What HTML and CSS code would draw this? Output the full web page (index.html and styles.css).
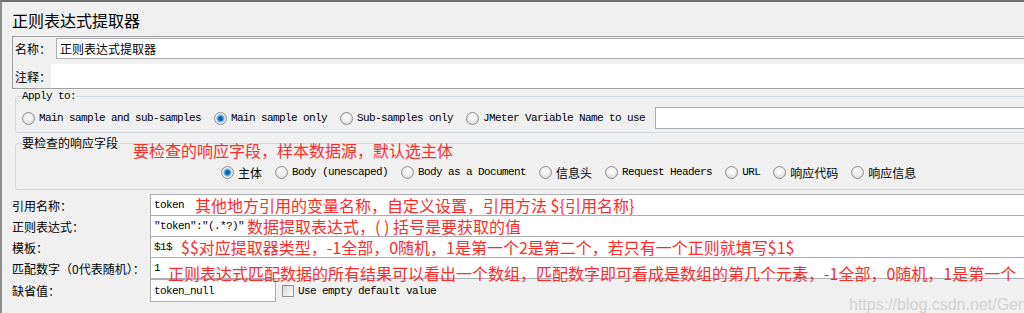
FILE: index.html
```html
<!DOCTYPE html>
<html lang="zh-CN">
<head>
  <meta charset="UTF-8" />
  <title>正则表达式提取器</title>
  <link rel="stylesheet" href="styles.css">
</head>
<body>
  <div class="page">
    <h1 class="title">正则表达式提取器</h1>

    <div class="panel">
      <div class="panel-row">
        <span class="panel-label">名称：</span>
        <div class="box name-box">正则表达式提取器</div>
      </div>
      <div class="panel-row comment-row">
        <span class="panel-label short">注释：</span>
        <div class="comment-box"></div>
      </div>
    </div>

    <fieldset class="group apply">
      <legend class="mono">Apply to:</legend>
      <div class="options">
        <label class="opt"><span class="radio"></span><span class="mono">Main sample and sub-samples</span></label>
        <label class="opt"><span class="radio on"></span><span class="mono">Main sample only</span></label>
        <label class="opt"><span class="radio"></span><span class="mono">Sub-samples only</span></label>
        <label class="opt"><span class="radio"></span><span class="mono">JMeter Variable Name to use</span></label>
        <div class="box var-box"></div>
      </div>
    </fieldset>

    <fieldset class="group fields">
      <legend class="cjk-legend">要检查的响应字段<span class="note legend-note">要检查的响应字段，样本数据源，默认选主体</span></legend>
      <div class="options field-options">
        <label class="opt"><span class="radio on"></span><span>主体</span></label>
        <label class="opt"><span class="radio"></span><span class="mono">Body (unescaped)</span></label>
        <label class="opt"><span class="radio"></span><span class="mono">Body as a Document</span></label>
        <label class="opt"><span class="radio"></span><span>信息头</span></label>
        <label class="opt"><span class="radio"></span><span class="mono">Request Headers</span></label>
        <label class="opt"><span class="radio"></span><span class="mono">URL</span></label>
        <label class="opt"><span class="radio"></span><span>响应代码</span></label>
        <label class="opt"><span class="radio"></span><span>响应信息</span></label>
      </div>
    </fieldset>

    <div class="form">
      <span class="form-label">引用名称：</span>
      <div class="box row-box"><span class="mono">token</span><span class="note n1">其他地方引用的变量名称，自定义设置，引用方法 ${引用名称}</span></div>

      <span class="form-label">正则表达式：</span>
      <div class="box row-box stack"><span class="mono">"token":"(.*?)"</span><span class="note n2">数据提取表达式，( ) 括号是要获取的值</span></div>

      <span class="form-label">模板：</span>
      <div class="box row-box stack"><span class="mono">$1$</span><span class="note n3">$$对应提取器类型，-1全部，0随机，1是第一个2是第二个，若只有一个正则就填写$1$</span></div>

      <span class="form-label">匹配数字（0代表随机）：</span>
      <div class="box row-box stack"><span class="mono">1</span><span class="note n4">正则表达式匹配数据的所有结果可以看出一个数组，匹配数字即可看成是数组的第几个元素，-1全部，0随机，1是第一个</span></div>

      <span class="form-label">缺省值：</span>
      <div class="default-row">
        <div class="box row-box short"><span class="mono">token_null</span></div>
        <label class="check-opt"><span class="check"></span><span class="mono">Use empty default value</span></label>
      </div>
    </div>

    <div class="watermark">https://blog.csdn.net/Gene</div>
  </div>
</body>
</html>
```

FILE: styles.css
```css
body { margin: 0; background: #f0f0f0; }
.page {
  position: relative;
  height: 311px;
  overflow: hidden;
  border-top: 2px solid #6e6e6e;
  border-left: 2px solid #8c8c8c;
  padding-left: 10px;
  font-family: "Noto Sans CJK SC", sans-serif;
  font-size: 12px;
  color: #000;
}
.mono { font-family: "Liberation Mono", monospace; font-size: 11px; letter-spacing: -0.6px; }

.title { margin: 0; padding-top: 7px; font-size: 16px; font-weight: normal; line-height: 22px; }

.box { display: flex; align-items: center; box-sizing: border-box; background: #fff; border: 1px solid #abadb3; border-right: none; white-space: nowrap; }

.panel { margin-top: 5px; border: 1px solid #a0a0a0; border-right: none; padding: 1px 0 0 2px; }
.panel-row { display: flex; align-items: center; }
.panel-label { width: 41px; flex: none; }
.panel-label.short { width: 36px; }
.name-box { flex: 1; height: 21px; padding-left: 3px; }
.comment-row { margin-top: 5px; }
.comment-box { flex: 1; height: 24px; background: #fff; }

.group { margin: 0 -30px 0 3px; min-width: 0; border: 1px solid #cfd8df; border-radius: 3px; }
.group legend { padding: 0; }
.apply { margin-top: 1px; padding: 5px 0 3px 6px; }
.apply legend { line-height: 12px; }
.fields { margin-top: 3px; padding: 15px 0 10px 6px; }
.cjk-legend { position: relative; line-height: 14px; }

.options { display: flex; align-items: center; height: 22px; }
.field-options { height: 14px; padding-left: 199px; }
.opt { display: flex; align-items: center; gap: 4px; margin-right: 13px; white-space: nowrap; }
.apply .opt:last-of-type { margin-right: 10px; }
.var-box { flex: 1; height: 22px; }

.radio {
  flex: none; width: 13px; height: 13px; box-sizing: border-box; border-radius: 50%;
  border: 1px solid #8e8f8f;
  background: radial-gradient(circle at 50% 40%, #ffffff 0, #eeeeee 45%, #c9c9c9 100%);
}
.radio.on {
  background: radial-gradient(circle at 50% 50%, #0b3760 0, #1c74c6 2px, #63bdf0 3.5px, #e4ecf2 4.5px, #f2f2f2 5px, #c6c6c6 6px);
}

.note { font-family: "Noto Sans CJK SC", sans-serif; font-size: 16px; line-height: 16px; color: #ff2b2b; white-space: nowrap; }
.legend-note { position: absolute; left: 111px; top: 6px; }
.n1 { margin-left: 11px; }
.n2 { margin-left: 3px; }
.n3 { margin-left: 9px; }
.n4 { margin-left: 8px; margin-top: 10px; position: relative; z-index: 1; }

.form { display: grid; grid-template-columns: 138px 1fr; margin-top: 4px; }
.form-label { align-self: center; white-space: nowrap; }
.row-box { height: 22px; padding-left: 3px; overflow: visible; }
.row-box.stack { margin-top: -1px; }
.default-row { display: flex; align-items: center; }
.row-box.short { width: 126px; height: 23px; border-right: 1px solid #abadb3; }
.check-opt { display: flex; align-items: center; gap: 4px; margin-left: 6px; }
.check {
  width: 12px; height: 12px; box-sizing: border-box; border: 1px solid #8e8f8f;
  background: linear-gradient(135deg, #d6d6d6, #ffffff);
}

.watermark {
  position: absolute; left: 847px; top: 294px;
  font-family: "Liberation Sans", Arial, sans-serif; font-size: 16px;
  color: #d2d2d2; white-space: nowrap;
}
```
